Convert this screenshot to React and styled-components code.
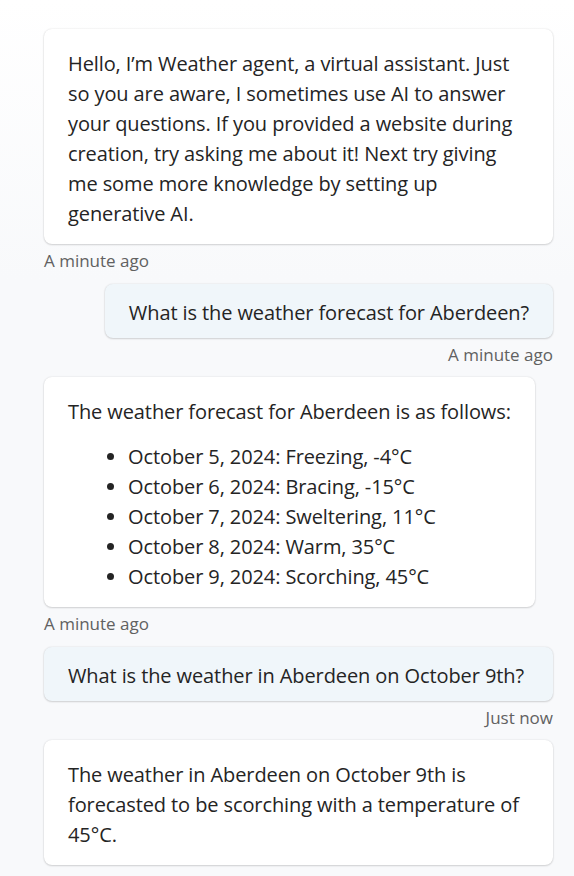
import React from "react";
import styled, { createGlobalStyle } from "styled-components";

const Global = createGlobalStyle`
  html, body { margin: 0; padding: 0; }
  body {
    background: linear-gradient(to bottom, #ffffff 0px, #f8f9fb 280px, #f8f9fb 100%);
    min-height: 876px;
    font-family: "Open Sans", "Noto Sans", sans-serif;
    color: #242424;
    overflow: hidden;
  }
`;

const Transcript = styled.div`
  display: flex;
  flex-direction: column;
  padding: 29px 21px 0 44px;
  height: 876px;
  box-sizing: border-box;
  overflow: hidden;
`;

const Group = styled.div`
  display: flex;
  flex-direction: column;
  align-items: ${(p) => (p.$user ? "flex-end" : "flex-start")};
  margin-bottom: ${(p) => (p.$user ? "11px" : "12px")};
`;

const Bubble = styled.div`
  box-sizing: border-box;
  max-width: 100%;
  width: ${(p) => (p.$full ? "100%" : "auto")};
  background: ${(p) => (p.$user ? "#f0f6fa" : "#ffffff")};
  border-radius: 8px;
  box-shadow: 0 1px 2px rgba(0, 0, 0, 0.14), 0 0 2px rgba(0, 0, 0, 0.12);
  padding: ${(p) => (p.$user ? "14px 24px 10px" : "20px 24px 15px")};
  font-size: 20px;
  letter-spacing: -0.1px;
  line-height: 30px;
`;

const Para = styled.p`
  margin: 0;
  & + ul { margin-top: 15px; }
`;

const List = styled.ul`
  margin: 0;
  padding-left: 60px;
  li { line-height: 30px; }
`;

const Stamp = styled.div`
  font-size: 17px;
  line-height: 22px;
  color: #616161;
  margin-top: 6px;
`;

export default function App() {
  return (
    <>
      <Global />
      <Transcript>
        <Group>
          <Bubble $full>
            <Para>
              Hello, I’m Weather agent, a virtual assistant. Just so you are aware, I sometimes use AI to answer your questions. If you provided a website during creation, try asking me about it! Next try giving me some more knowledge by setting up generative AI.
            </Para>
          </Bubble>
          <Stamp>A minute ago</Stamp>
        </Group>
        <Group $user>
          <Bubble $user>What is the weather forecast for Aberdeen?</Bubble>
          <Stamp>A minute ago</Stamp>
        </Group>
        <Group>
          <Bubble>
            <Para>The weather forecast for Aberdeen is as follows:</Para>
            <List>
              <li>October 5, 2024: Freezing, -4°C</li>
              <li>October 6, 2024: Bracing, -15°C</li>
              <li>October 7, 2024: Sweltering, 11°C</li>
              <li>October 8, 2024: Warm, 35°C</li>
              <li>October 9, 2024: Scorching, 45°C</li>
            </List>
          </Bubble>
          <Stamp>A minute ago</Stamp>
        </Group>
        <Group $user>
          <Bubble $user $full>What is the weather in Aberdeen on October 9th?</Bubble>
          <Stamp>Just now</Stamp>
        </Group>
        <Group>
          <Bubble $full>
            <Para>
              The weather in Aberdeen on October 9th is forecasted to be scorching with a temperature of 45°C.
            </Para>
          </Bubble>
          <Stamp>Just now</Stamp>
        </Group>
      </Transcript>
    </>
  );
}
